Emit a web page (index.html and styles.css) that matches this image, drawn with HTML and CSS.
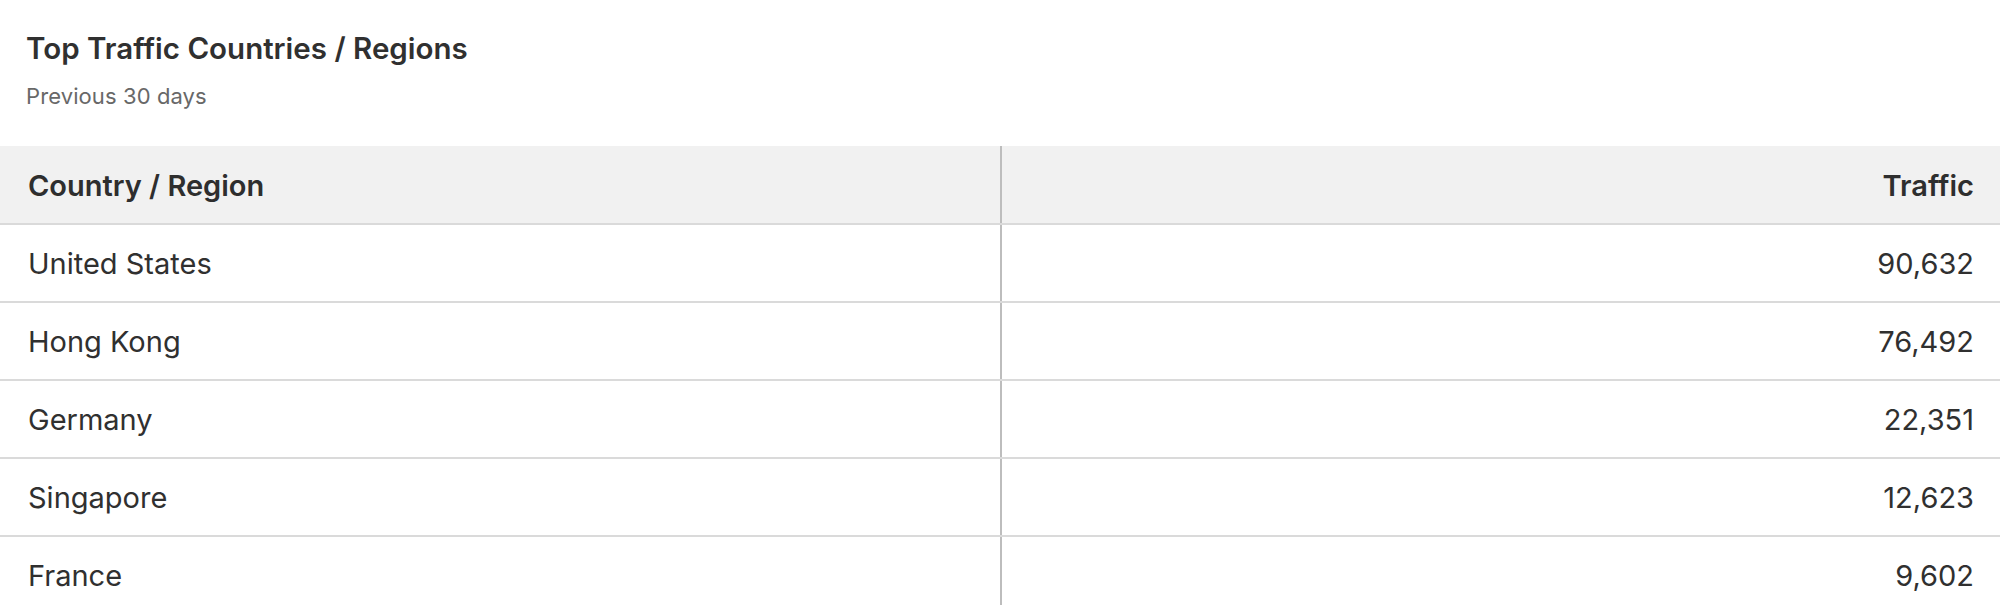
FILE: index.html
```html
<!DOCTYPE html>
<html lang="en">
<head>
<meta charset="utf-8">
<title>Top Traffic Countries / Regions</title>
<link rel="stylesheet" href="styles.css">
</head>
<body>
<section class="card">
  <header class="card-head">
    <h2 class="card-title">Top Traffic Countries / Regions</h2>
    <p class="card-sub">Previous 30 days</p>
  </header>
  <table class="traffic">
    <thead>
      <tr><th class="col-name">Country / Region</th><th class="col-num">Traffic</th></tr>
    </thead>
    <tbody>
      <tr><td class="col-name">United States</td><td class="col-num">90,632</td></tr>
      <tr><td class="col-name">Hong Kong</td><td class="col-num">76,492</td></tr>
      <tr><td class="col-name">Germany</td><td class="col-num">22,351</td></tr>
      <tr><td class="col-name">Singapore</td><td class="col-num">12,623</td></tr>
      <tr><td class="col-name">France</td><td class="col-num">9,602</td></tr>
    </tbody>
  </table>
</section>
</body>
</html>
```
FILE: styles.css
```css
html, body {
  margin: 0;
  padding: 0;
  background: #ffffff;
}
body {
  font-family: Inter, "Noto Sans", "Liberation Sans", sans-serif;
  color: #333333;
}
.card-head {
  padding: 31px 26px 0 26px;
  height: 146px;
  box-sizing: border-box;
}
.card-title {
  margin: 0;
  font-size: 29.5px;
  line-height: 34px;
  font-weight: 600;
  color: #303030;
  letter-spacing: 0;
}
.card-sub {
  margin: 18px 0 0 0;
  font-size: 22px;
  line-height: 26px;
  font-weight: 400;
  color: #686868;
  letter-spacing: 0.1px;
}
.traffic {
  width: 100%;
  border-collapse: collapse;
  table-layout: fixed;
}
.traffic th,
.traffic td {
  box-sizing: border-box;
  height: 78px;
  padding: 2px 0 0 0;
  font-size: 29px;
  line-height: 34px;
  border-bottom: 2px solid #dadada;
  vertical-align: middle;
}
.traffic th {
  background: #f1f1f1;
  font-weight: 600;
  color: #2e2e2e;
}
.traffic td {
  font-weight: 400;
  color: #303030;
}
.col-name {
  width: 1001px;
  text-align: left;
  padding-left: 28px !important;
}
.col-num {
  text-align: right;
  padding-right: 26px !important;
  border-left: 2px solid #bdbdbd;
}
```
